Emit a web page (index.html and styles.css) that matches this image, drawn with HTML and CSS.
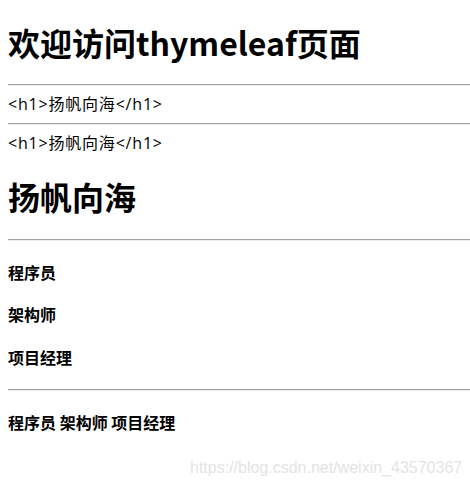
FILE: index.html
```html
<!DOCTYPE html>
<html>
<head>
<meta charset="utf-8">
<link rel="stylesheet" href="styles.css">
</head>
<body>
<main class="page">
<h1 class="title">欢迎访问thymeleaf页面</h1>
<hr class="rule">
<div class="line">&lt;h1&gt;扬帆向海&lt;/h1&gt;</div>
<hr class="rule">
<div class="line">&lt;h1&gt;扬帆向海&lt;/h1&gt;</div>
<h1 class="title">扬帆向海</h1>
<hr class="rule">
<h4 class="item">程序员</h4>
<h4 class="item">架构师</h4>
<h4 class="item">项目经理</h4>
<hr class="rule">
<h4 class="item"><span>程序员</span> <span>架构师</span> <span>项目经理</span></h4>
</main>
<div class="watermark">https://blog.csdn.net/weixin_43570367</div>
</body>
</html>
```
FILE: styles.css
```css
html, body {
  background: #fff;
}
body {
  margin: 0;
  font-family: "Noto Sans CJK SC", sans-serif;
  color: #000;
  font-size: 16px;
  line-height: 1.32;
}
.page {
  display: flow-root;
  padding-left: 8px;
}
.title {
  font-size: 32px;
  font-weight: bold;
  margin: 21px 0 21.44px;
  line-height: 42px;
}
.rule {
  margin: 8px 0;
  border: none;
  border-top: 1px solid #a0a0a0;
  border-bottom: 1px solid #eeeeee;
  height: 0;
}
.line {
  font-family: "Open Sans", "Noto Sans CJK SC", sans-serif;
  font-size: 16px;
  line-height: 21px;
  letter-spacing: 0.8px;
}
.item {
  font-size: 16px;
  font-weight: bold;
  margin: 21.28px 0;
  line-height: 21px;
}
.watermark {
  position: absolute;
  left: 190px;
  top: 457px;
  font-family: "Liberation Sans", Arial, sans-serif;
  font-size: 16px;
  color: #e4e4e4;
  white-space: nowrap;
}
```
